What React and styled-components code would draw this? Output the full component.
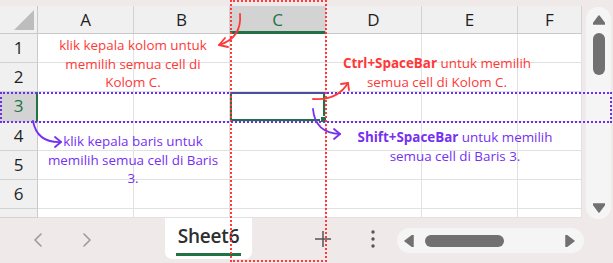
import React from "react";
import styled, { createGlobalStyle } from "styled-components";

const GlobalStyle = createGlobalStyle`
  html, body {
    margin: 0;
    padding: 0;
    background: #efe9ea;
  }
`;

const GREEN = "#217346";
const RED = "#ff3838";
const PURPLE = "#7630f2";

const Page = styled.div`
  position: relative;
  width: 613px;
  height: 263px;
  background: #efe9ea;
  display: flex;
  flex-direction: column;
  overflow: hidden;
  font-family: "Open Sans", "Noto Sans", sans-serif;
`;

const Main = styled.div`
  display: flex;
  align-items: flex-start;
  padding-top: 6px;
  height: 212px;
`;

const Sheet = styled.div`
  display: grid;
  grid-template-columns: 38px repeat(5, 96px) 64px;
  grid-template-rows: 28px 29px 29px 30px 29px 29px 29px 9px;
  width: 582px;
  height: 212px;
  background: #fff;
  overflow: hidden;
`;

const Corner = styled.div`
  background: #f0f0f0;
  border-right: 1px solid #c9c9c9;
  border-bottom: 1px solid #c9c9c9;
  display: flex;
  align-items: flex-end;
  justify-content: flex-end;
  padding: 0 3px 3px 0;
  box-sizing: border-box;
`;

const ColHead = styled.div`
  box-sizing: border-box;
  background: ${(p) => (p.$active ? "#d3d3d3" : "#f0f0f0")};
  color: ${(p) => (p.$active ? GREEN : "#1f1f1f")};
  border-right: 1px solid #d2d2d2;
  border-bottom: ${(p) => (p.$active ? `3px solid ${GREEN}` : "1px solid #c9c9c9")};
  display: flex;
  align-items: center;
  justify-content: center;
  font-size: 17px;
  padding-top: ${(p) => (p.$active ? "2px" : "0")};
`;

const RowHead = styled.div`
  box-sizing: border-box;
  overflow: hidden;
  background: ${(p) => (p.$active ? "#d3d3d3" : "#f0f0f0")};
  color: ${(p) => (p.$active ? GREEN : "#1f1f1f")};
  border-right: ${(p) => (p.$active ? `2px solid ${GREEN}` : "1px solid #c9c9c9")};
  border-bottom: 1px solid #d2d2d2;
  display: flex;
  align-items: flex-start;
  justify-content: center;
  font-size: 17px;
  line-height: 27px;
  padding-left: ${(p) => (p.$active ? "1px" : "0")};
`;

const Cell = styled.div`
  position: relative;
  box-sizing: border-box;
  border-right: 1px solid #e1e1e1;
  border-bottom: 1px solid #e1e1e1;
  ${(p) =>
    p.$selected &&
    `
    box-shadow: inset 0 0 0 2px ${GREEN};
    &::after {
      content: "";
      position: absolute;
      right: -2px;
      bottom: -2px;
      width: 5px;
      height: 5px;
      background: ${GREEN};
      border: 1px solid #fff;
    }
  `}
`;

const VScroll = styled.div`
  margin: 1px 0 0 4px;
  width: 25px;
  height: 212px;
  background: #f6f5f5;
  border-radius: 12px;
  display: flex;
  flex-direction: column;
  align-items: center;
  box-sizing: border-box;
  padding: 7px 0 6px;
`;

const VThumb = styled.div`
  width: 12px;
  height: 42px;
  margin-top: 8px;
  border-radius: 6px;
  background: #717171;
`;

const Spacer = styled.div`
  flex: 1;
`;

const Bottom = styled.div`
  display: flex;
  align-items: flex-start;
  height: 45px;
`;

const Nav = styled.div`
  width: 165px;
  display: flex;
  gap: 39px;
  padding: 15px 0 0 33px;
  box-sizing: border-box;
`;

const Tab = styled.div`
  width: 87px;
  height: 41px;
  background: #fff;
  border-radius: 0 0 7px 7px;
  display: flex;
  flex-direction: column;
  align-items: center;
  box-sizing: border-box;
  padding-top: 4px;
`;

const TabLabel = styled.span`
  font-size: 19px;
  font-weight: 600;
  color: #2e2e2e;
  line-height: 28px;
  letter-spacing: -0.2px;
`;

const TabLine = styled.div`
  width: 65px;
  height: 3px;
  margin-top: 3px;
  background: ${GREEN};
`;

const Tool = styled.div`
  width: ${(p) => p.$w}px;
  margin-left: ${(p) => p.$ml}px;
  height: 45px;
  display: flex;
  align-items: center;
  justify-content: center;
  padding-bottom: 4px;
  box-sizing: border-box;
`;

const HScroll = styled.div`
  margin: 10px 0 0 14px;
  width: 187px;
  height: 25px;
  background: #f6f5f5;
  border-radius: 13px;
  display: flex;
  align-items: center;
  box-sizing: border-box;
  padding: 0 9px 0 7px;
`;

const HThumb = styled.div`
  width: 79px;
  height: 12px;
  margin-left: 11px;
  border-radius: 6px;
  background: #717171;
`;

const Overlay = styled.svg`
  position: absolute;
  left: 0;
  top: 0;
  pointer-events: none;
`;

const DotBox = styled.div`
  position: absolute;
  left: ${(p) => p.$x}px;
  top: ${(p) => p.$y}px;
  width: ${(p) => p.$w}px;
  height: ${(p) => p.$h}px;
  box-sizing: border-box;
  border: 2px dotted ${(p) => p.$color};
  pointer-events: none;
`;

const Note = styled.div`
  position: absolute;
  left: ${(p) => p.$cx - 120}px;
  top: ${(p) => p.$y}px;
  width: 240px;
  text-align: center;
  white-space: nowrap;
  font-family: "Open Sans", "Noto Sans", sans-serif;
  font-size: 13.4px;
  line-height: 18.5px;
  color: ${(p) => p.$color};
  b {
    font-weight: 700;
  }
`;

const Tri = ({ dir }) => {
  const pts = {
    up: "0,10 6,2 12,10",
    down: "0,2 6,10 12,2",
    left: "9,0 9,12 1,6",
    right: "1,0 1,12 9,6",
  }[dir];
  const w = dir === "up" || dir === "down" ? 12 : 10;
  const h = dir === "up" || dir === "down" ? 11 : 12;
  return (
    <svg width={w} height={h} viewBox={`0 0 ${w} ${h}`}>
      <polygon points={pts} fill="#717171" strokeLinejoin="round" stroke="#717171" strokeWidth="1.5" />
    </svg>
  );
};

const Chevron = ({ flip }) => (
  <svg width="10" height="14" viewBox="0 0 10 14">
    <path
      d={flip ? "M2 1 L8 7 L2 13" : "M8 1 L2 7 L8 13"}
      fill="none"
      stroke="#9b9b9b"
      strokeWidth="1.6"
      strokeLinecap="round"
      strokeLinejoin="round"
    />
  </svg>
);

const cols = ["A", "B", "C", "D", "E", "F"];
const rows = [1, 2, 3, 4, 5, 6, 7];

export default function App() {
  return (
    <Page>
      <GlobalStyle />
      <Main>
        <Sheet>
          <Corner>
            <svg width="20" height="20" viewBox="0 0 20 20">
              <polygon points="20,0 20,20 0,20" fill="#bdbdbd" />
            </svg>
          </Corner>
          {cols.map((c) => (
            <ColHead key={c} $active={c === "C"}>
              {c}
            </ColHead>
          ))}
          {rows.map((r) => (
            <React.Fragment key={r}>
              <RowHead $active={r === 3}>{r}</RowHead>
              {cols.map((c) => (
                <Cell key={c} $selected={r === 3 && c === "C"} />
              ))}
            </React.Fragment>
          ))}
        </Sheet>
        <VScroll>
          <Tri dir="up" />
          <VThumb />
          <Spacer />
          <Tri dir="down" />
        </VScroll>
      </Main>
      <Bottom>
        <Nav>
          <Chevron />
          <Chevron flip />
        </Nav>
        <Tab>
          <TabLabel>Sheet6</TabLabel>
          <TabLine />
        </Tab>
        <Tool $w={40} $ml={51}>
          <svg width="18" height="18" viewBox="0 0 18 18">
            <path d="M9 1 V17 M1 9 H17" stroke="#555" strokeWidth="1.5" />
          </svg>
        </Tool>
        <Tool $w={20} $ml={20}>
          <svg width="4" height="18" viewBox="0 0 4 18">
            <circle cx="2" cy="2" r="1.7" fill="#555" />
            <circle cx="2" cy="9" r="1.7" fill="#555" />
            <circle cx="2" cy="16" r="1.7" fill="#555" />
          </svg>
        </Tool>
        <HScroll>
          <Tri dir="left" />
          <HThumb />
          <Spacer />
          <Tri dir="right" />
        </HScroll>
      </Bottom>

      <DotBox $x={230} $y={0} $w={97} $h={262} $color="#ff3a3a" />
      <DotBox $x={0} $y={92} $w={612} $h={31} $color="#6d2cf4" />

      <Note $cx={133} $y={36} $color={RED}>
        klik kepala kolom untuk
        <br />
        memilih semua cell di
        <br />
        Kolom C.
      </Note>
      <Note $cx={437} $y={54} $color={RED}>
        <b>Ctrl+SpaceBar</b> untuk memilih
        <br />
        semua cell di Kolom C.
      </Note>
      <Note $cx={133} $y={132} $color={PURPLE}>
        klik kepala baris untuk
        <br />
        memilih semua cell di Baris
        <br />
        3.
      </Note>
      <Note $cx={455} $y={128} $color={PURPLE}>
        <b>Shift+SpaceBar</b> untuk memilih
        <br />
        semua cell di Baris 3.
      </Note>

      <Overlay width="613" height="263" viewBox="0 0 613 263">
        <g fill="none" strokeWidth="1.8" strokeLinecap="round" strokeLinejoin="round">
          <g stroke={RED}>
            <path d="M240 14 Q242 38 219 45" />
            <path d="M225 38 L219 45 L228 47" />
            <path d="M313 99 Q337 101 348 83" />
            <path d="M341 84 L348 83 L349 90" />
          </g>
          <g stroke={PURPLE}>
            <path d="M33 121 Q37 143 61 142" />
            <path d="M55 137 L61 142 L55 147" />
            <path d="M313 109 Q315 133 340 134" />
            <path d="M334 129 L340 134 L334 139" />
          </g>
        </g>
      </Overlay>
    </Page>
  );
}
